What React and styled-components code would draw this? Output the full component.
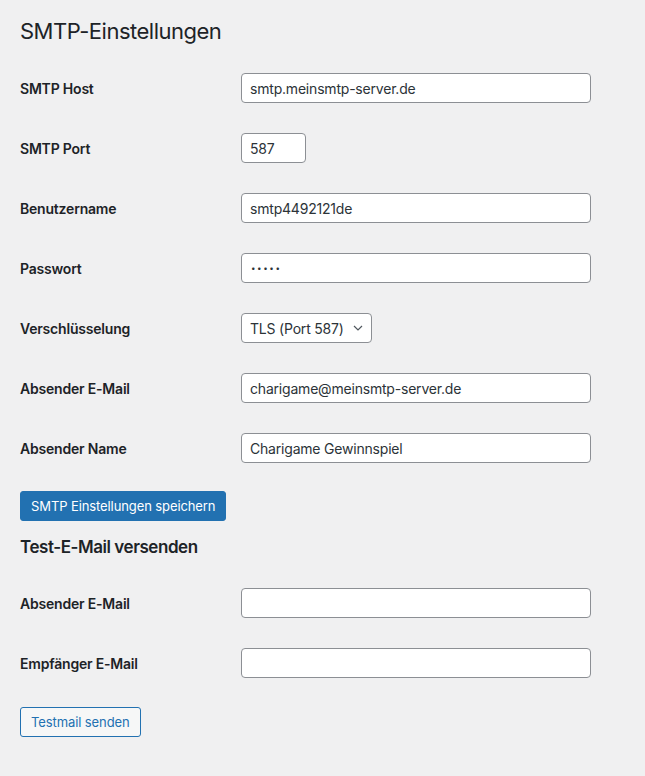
import styled, { createGlobalStyle } from 'styled-components'

const GlobalStyle = createGlobalStyle`
  body {
    margin: 0;
    background: #f0f0f1;
    color: #1d2327;
    font-family: Inter, "Noto Sans", sans-serif;
    font-size: 14px;
  }
`

const Wrap = styled.div`
  padding: 16px 20px 40px;
`

const Title = styled.h1`
  font-size: 22px;
  font-weight: 400;
  line-height: 30px;
  margin: 0 0 12px;
  letter-spacing: -0.5px;
`

const SubTitle = styled.h2`
  font-size: 17px;
  font-weight: 600;
  line-height: 24px;
  margin: 14px 0 14px;
  letter-spacing: -0.45px;
`

const Form = styled.div`
  display: flex;
  flex-direction: column;
`

const Row = styled.div`
  display: grid;
  grid-template-columns: 221px 1fr;
  align-items: center;
  height: 60px;
`

const Label = styled.label`
  font-weight: 600;
  font-size: 14px;
  letter-spacing: -0.2px;
`

const Input = styled.input`
  box-sizing: border-box;
  width: ${p => p.$width || '350px'};
  height: 30px;
  padding: 0 8px;
  border: 1px solid #8c8f94;
  border-radius: 4px;
  background: #fff;
  color: #2c3338;
  font-family: inherit;
  font-size: 14px;
  letter-spacing: -0.2px;
  outline: none;

  &[type='password'] {
    font-size: 8px;
    letter-spacing: 1.6px;
    padding-left: 9px;
  }
`

const SelectWrap = styled.div`
  position: relative;
  width: 131px;
`

const Select = styled.select`
  box-sizing: border-box;
  appearance: none;
  width: 100%;
  height: 30px;
  padding: 0 24px 0 8px;
  border: 1px solid #8c8f94;
  border-radius: 4px;
  background: #fff;
  color: #2c3338;
  font-family: inherit;
  font-size: 14px;
  letter-spacing: -0.2px;
`

const Chevron = styled.svg`
  position: absolute;
  right: 9px;
  top: 10px;
  pointer-events: none;
`

const Button = styled.button`
  box-sizing: border-box;
  align-self: flex-start;
  height: 30px;
  padding: 0 10px;
  border-radius: 3px;
  font-family: inherit;
  font-size: 13px;
  letter-spacing: -0.1px;
  cursor: pointer;
  border: 1px solid #2271b1;
  background: ${p => (p.$primary ? '#2271b1' : '#f6f7f7')};
  color: ${p => (p.$primary ? '#fff' : '#2271b1')};
  margin-top: ${p => p.$top || '0'};
`

const Field = ({ label, ...rest }) => (
  <Row>
    <Label>{label}</Label>
    <div>
      <Input {...rest} />
    </div>
  </Row>
)

const App = () => (
  <Wrap>
    <GlobalStyle />
    <Title>SMTP-Einstellungen</Title>
    <Form>
      <Field label='SMTP Host' defaultValue='smtp.meinsmtp-server.de' />
      <Field label='SMTP Port' defaultValue='587' $width='65px' />
      <Field label='Benutzername' defaultValue='smtp4492121de' />
      <Field label='Passwort' type='password' defaultValue='12345' />
      <Row>
        <Label>Verschlüsselung</Label>
        <SelectWrap>
          <Select defaultValue='tls'>
            <option value='tls'>TLS (Port 587)</option>
            <option value='ssl'>SSL (Port 465)</option>
          </Select>
          <Chevron width='10' height='10' viewBox='0 0 10 10'>
            <path d='M1 3l4 4 4-4' fill='none' stroke='#50575e' strokeWidth='1.2' />
          </Chevron>
        </SelectWrap>
      </Row>
      <Field label='Absender E-Mail' defaultValue='charigame@meinsmtp-server.de' />
      <Field label='Absender Name' defaultValue='Charigame Gewinnspiel' />
      <Button $primary $top='13px'>SMTP Einstellungen speichern</Button>
    </Form>
    <SubTitle>Test-E-Mail versenden</SubTitle>
    <Form>
      <Field label='Absender E-Mail' />
      <Field label='Empfänger E-Mail' />
      <Button $top='14px'>Testmail senden</Button>
    </Form>
  </Wrap>
)

export default App
